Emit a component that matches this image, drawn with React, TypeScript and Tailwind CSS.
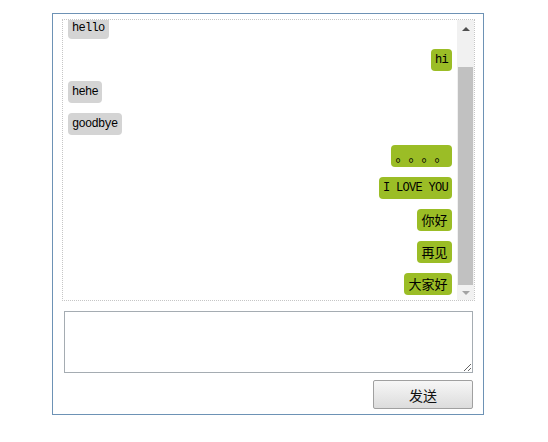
type Msg = { text: string; mine: boolean; latin: boolean }

const messages: Msg[] = [
  { text: 'hello', mine: false, latin: true },
  { text: 'hi', mine: true, latin: true },
  { text: 'hehe', mine: false, latin: true },
  { text: 'goodbye', mine: false, latin: true },
  { text: '。。。。', mine: true, latin: false },
  { text: 'I LOVE YOU', mine: true, latin: true },
  { text: '你好', mine: true, latin: false },
  { text: '再见', mine: true, latin: false },
  { text: '大家好', mine: true, latin: false },
]

function Bubble({ msg }: { msg: Msg }) {
  return (
    <div className={`flex ${msg.mine ? 'justify-end' : 'justify-start'}`}>
      <span
        className={`h-[22px] rounded-[4px] text-black whitespace-pre [text-spacing-trim:space-all] ${
          msg.mine ? 'bg-[#9bbd26]' : 'bg-[#d4d4d4]'
        } ${
          msg.latin
            ? "px-[4px] font-['Liberation_Mono','Noto_Sans_CJK_SC',monospace] text-[12px] leading-[22px] tracking-[-0.7px]"
            : "px-[4.5px] font-['Noto_Sans_CJK_SC',sans-serif] text-[13px] leading-[22px]"
        }`}
      >
        {msg.text}
      </span>
    </div>
  )
}

function FakeScrollbar() {
  return (
    <div className="w-[17px] bg-[#f1f1f1] flex flex-col">
      <div className="h-[17px] flex items-center justify-center">
        <div className="w-0 h-0 border-l-[4px] border-r-[4px] border-b-[4px] border-l-transparent border-r-transparent border-b-[#505050]" />
      </div>
      <div className="h-[30px]" />
      <div className="h-[218px] mx-[1px] bg-[#c1c1c1]" />
      <div className="flex-1 flex items-center justify-center">
        <div className="w-0 h-0 border-l-[4px] border-r-[4px] border-t-[4px] border-l-transparent border-r-transparent border-t-[#a3a3a3]" />
      </div>
    </div>
  )
}

export default function App() {
  return (
    <div className="min-h-[442px] bg-white pt-[13px] pl-[52px]">
      <div className="w-[432px] h-[402px] border border-[#6d92b5] pt-[5px] pl-[9px]">
        {/* message list */}
        <div className="w-[413px] h-[282px] border border-dotted border-[#c6c6c6] flex">
          <div className="flex-1 overflow-hidden px-[5px]">
            <div className="-mt-[3px] flex flex-col gap-[10px]">
              {messages.map((m, i) => (
                <Bubble key={i} msg={m} />
              ))}
            </div>
          </div>
          <FakeScrollbar />
        </div>

        {/* input */}
        <textarea className="block mt-[10px] ml-[2px] w-[409px] h-[62px] border border-[#a5acb2] outline-none" />

        <div className="w-[411px] flex justify-end mt-[7px]">
          <button className="w-[100px] h-[29px] border border-[#a0a0a0] rounded-[2px] bg-gradient-to-b from-[#f7f7f7] to-[#dcdcdc] text-[14px] text-[#111] font-['Noto_Sans_CJK_SC',sans-serif] leading-none">
            发送
          </button>
        </div>
      </div>
    </div>
  )
}
